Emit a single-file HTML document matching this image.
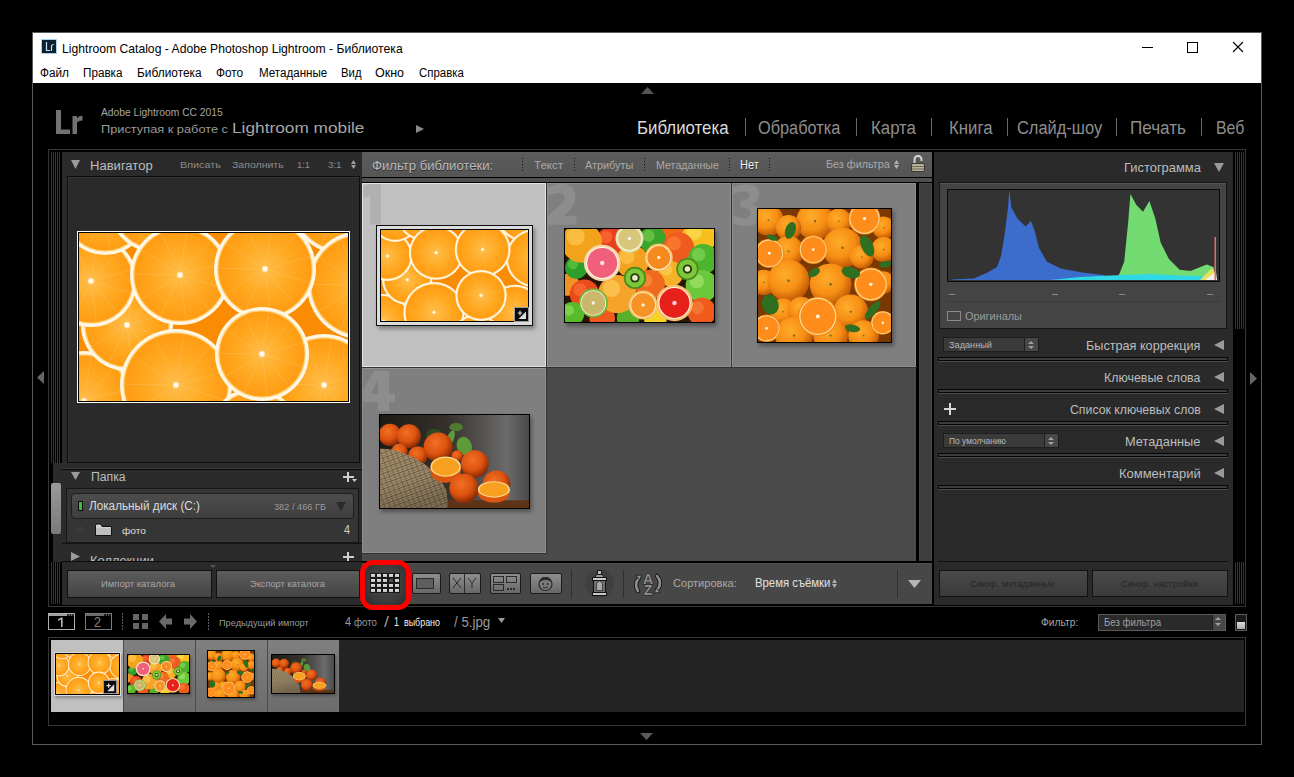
<!DOCTYPE html>
<html><head><meta charset="utf-8"><title>Lightroom</title>
<style>
html,body{margin:0;padding:0;}
body{width:1294px;height:777px;background:#000;position:relative;overflow:hidden;font-family:"Liberation Sans",sans-serif;}
</style></head><body>
<div style="position:absolute;left:32px;top:32px;width:1230px;height:713px;border:1px solid #5a5a5a;box-sizing:border-box;background:#000"></div>
<div style="position:absolute;left:33px;top:33px;width:1228px;height:50px;background:#fff"></div>
<svg style="position:absolute;left:41px;top:39px;" width="16" height="15" viewBox="0 0 16 15" preserveAspectRatio="none"><rect x="0.5" y="0.5" width="15" height="14" fill="#0e202d" stroke="#a8d4ee" stroke-width="1"/><path d="M5.5 3 V11.5 H9" stroke="#c4e6fa" stroke-width="1.2" fill="none"/><path d="M10.5 12 V6.8 Q11 5.5 12.8 5.5" stroke="#c4e6fa" stroke-width="1.2" fill="none"/></svg>
<div style="position:absolute;left:62.4px;top:42.00px;font-size:13.37px;line-height:13.37px;color:#000;white-space:nowrap;transform:scaleX(0.9105);transform-origin:0 0;">Lightroom Catalog - Adobe Photoshop Lightroom - Библиотека</div>
<div style="position:absolute;left:40px;top:67.00px;font-size:12.50px;line-height:12.50px;color:#000;white-space:nowrap;transform:scaleX(0.9437);transform-origin:0 0;">Файл</div>
<div style="position:absolute;left:83.3px;top:67.00px;font-size:12.50px;line-height:12.50px;color:#000;white-space:nowrap;transform:scaleX(0.9355);transform-origin:0 0;">Правка</div>
<div style="position:absolute;left:137px;top:67.00px;font-size:12.50px;line-height:12.50px;color:#000;white-space:nowrap;transform:scaleX(0.9519);transform-origin:0 0;">Библиотека</div>
<div style="position:absolute;left:216.3px;top:67.00px;font-size:12.50px;line-height:12.50px;color:#000;white-space:nowrap;transform:scaleX(0.9471);transform-origin:0 0;">Фото</div>
<div style="position:absolute;left:258.5px;top:67.00px;font-size:12.50px;line-height:12.50px;color:#000;white-space:nowrap;transform:scaleX(0.9278);transform-origin:0 0;">Метаданные</div>
<div style="position:absolute;left:341px;top:67.00px;font-size:12.50px;line-height:12.50px;color:#000;white-space:nowrap;transform:scaleX(0.9065);transform-origin:0 0;">Вид</div>
<div style="position:absolute;left:375px;top:67.00px;font-size:12.50px;line-height:12.50px;color:#000;white-space:nowrap;transform:scaleX(0.9984);transform-origin:0 0;">Окно</div>
<div style="position:absolute;left:418.7px;top:67.00px;font-size:12.50px;line-height:12.50px;color:#000;white-space:nowrap;transform:scaleX(0.9157);transform-origin:0 0;">Справка</div>
<div style="position:absolute;left:1142px;top:47px;width:11px;height:1px;background:#000"></div>
<div style="position:absolute;left:1187px;top:42px;width:11px;height:11px;border:1px solid #000;box-sizing:border-box"></div>
<svg style="position:absolute;left:1232px;top:41px;" width="12" height="12" viewBox="0 0 12 12" preserveAspectRatio="none"><path d="M1 1 L11 11 M11 1 L1 11" stroke="#000" stroke-width="1.1"/></svg>
<svg style="position:absolute;left:55px;top:109px;" width="29" height="26" viewBox="0 0 29 26" preserveAspectRatio="none"><path d="M1 1 H6 V20.5 H15 V25 H1Z" fill="#727272"/><path d="M17.5 25 V7 H22 V9.5 Q23.5 6.8 27.5 6.8 V11.5 Q23.5 11.5 22 13.5 V25Z" fill="#727272"/></svg>
<div style="position:absolute;left:100.5px;top:107.00px;font-size:10.76px;line-height:10.76px;color:#a5a5a5;white-space:nowrap;transform:scaleX(0.9563);transform-origin:0 0;">Adobe Lightroom CC 2015</div>
<div style="position:absolute;left:100.5px;top:123.00px;font-size:11.63px;line-height:11.63px;color:#9a9a9a;white-space:nowrap;transform:scaleX(1.0993);transform-origin:0 0;">Приступая к работе с</div>
<div style="position:absolute;left:232px;top:121.00px;font-size:14.83px;line-height:14.83px;color:#a6a6a6;white-space:nowrap;transform:scaleX(1.1642);transform-origin:0 0;">Lightroom mobile</div>
<svg style="position:absolute;left:416px;top:125px" width="8" height="8"><polygon points="0,0 8,4.0 0,8" fill="#8a8a8a"/></svg>
<div style="position:absolute;left:637px;top:120.00px;font-size:17.88px;line-height:17.88px;color:#dcdcdc;white-space:nowrap;transform:scaleX(0.9433);transform-origin:0 0;">Библиотека</div>
<div style="position:absolute;left:758px;top:120.00px;font-size:17.88px;line-height:17.88px;color:#8e8e8e;white-space:nowrap;transform:scaleX(0.9127);transform-origin:0 0;">Обработка</div>
<div style="position:absolute;left:871px;top:120.00px;font-size:17.88px;line-height:17.88px;color:#8e8e8e;white-space:nowrap;transform:scaleX(0.9407);transform-origin:0 0;">Карта</div>
<div style="position:absolute;left:949px;top:120.00px;font-size:17.88px;line-height:17.88px;color:#8e8e8e;white-space:nowrap;transform:scaleX(0.9386);transform-origin:0 0;">Книга</div>
<div style="position:absolute;left:1016.7px;top:120.00px;font-size:17.88px;line-height:17.88px;color:#8e8e8e;white-space:nowrap;transform:scaleX(0.9203);transform-origin:0 0;">Слайд-шоу</div>
<div style="position:absolute;left:1130.2px;top:120.00px;font-size:17.88px;line-height:17.88px;color:#8e8e8e;white-space:nowrap;transform:scaleX(0.9561);transform-origin:0 0;">Печать</div>
<div style="position:absolute;left:1216.4px;top:120.00px;font-size:17.88px;line-height:17.88px;color:#8e8e8e;white-space:nowrap;transform:scaleX(0.8901);transform-origin:0 0;">Веб</div>
<div style="position:absolute;left:745px;top:118px;width:1px;height:18px;background:#6a6a6a"></div>
<div style="position:absolute;left:856px;top:118px;width:1px;height:18px;background:#6a6a6a"></div>
<div style="position:absolute;left:931px;top:118px;width:1px;height:18px;background:#6a6a6a"></div>
<div style="position:absolute;left:1007px;top:118px;width:1px;height:18px;background:#6a6a6a"></div>
<div style="position:absolute;left:1116px;top:118px;width:1px;height:18px;background:#6a6a6a"></div>
<div style="position:absolute;left:1201px;top:118px;width:1px;height:18px;background:#6a6a6a"></div>
<svg style="position:absolute;left:641px;top:87px" width="13" height="7"><polygon points="0,7 13,7 6.5,0" fill="#555"/></svg>
<svg style="position:absolute;left:640px;top:733px" width="13" height="7"><polygon points="0,0 13,0 6.5,7" fill="#5a5a5a"/></svg>
<svg style="position:absolute;left:37px;top:371px" width="7" height="13"><polygon points="7,0 7,13 0,6.5" fill="#666"/></svg>
<svg style="position:absolute;left:1250px;top:372px" width="7" height="13"><polygon points="0,0 7,6.5 0,13" fill="#666"/></svg>
<div style="position:absolute;left:48px;top:149px;width:1198px;height:458px;border:1px solid #363636;box-sizing:border-box"></div>
<div style="position:absolute;left:51px;top:152px;width:1px;height:311px;background:#343434"></div>
<div style="position:absolute;left:53px;top:152px;width:1px;height:311px;background:#343434"></div>
<div style="position:absolute;left:55px;top:152px;width:1px;height:311px;background:#343434"></div>
<div style="position:absolute;left:57px;top:152px;width:1px;height:311px;background:#343434"></div>
<div style="position:absolute;left:59px;top:152px;width:1px;height:311px;background:#343434"></div>
<div style="position:absolute;left:62px;top:152px;width:300px;height:311px;background:#2a2a2a"></div>
<svg style="position:absolute;left:71px;top:160px" width="9" height="9"><polygon points="0,0 9,0 4.5,9" fill="#9a9a9a"/></svg>
<div style="position:absolute;left:90.2px;top:159.00px;font-size:13.08px;line-height:13.08px;color:#bdbdbd;white-space:nowrap;transform:scaleX(0.9976);transform-origin:0 0;">Навигатор</div>
<div style="position:absolute;left:179.6px;top:160.00px;font-size:9.88px;line-height:9.88px;color:#8c8c8c;white-space:nowrap;transform:scaleX(1.0920);transform-origin:0 0;">Вписать</div>
<div style="position:absolute;left:232.3px;top:160.00px;font-size:9.88px;line-height:9.88px;color:#8c8c8c;white-space:nowrap;transform:scaleX(1.0655);transform-origin:0 0;">Заполнить</div>
<div style="position:absolute;left:297px;top:160.00px;font-size:9.88px;line-height:9.88px;color:#8c8c8c;white-space:nowrap;transform:scaleX(0.9461);transform-origin:0 0;">1:1</div>
<div style="position:absolute;left:327.5px;top:160.00px;font-size:9.88px;line-height:9.88px;color:#8c8c8c;white-space:nowrap;transform:scaleX(0.9825);transform-origin:0 0;">3:1</div>
<svg style="position:absolute;left:351px;top:160px" width="5" height="4"><polygon points="0,4 5,4 2.5,0" fill="#a0a0a0"/></svg>
<svg style="position:absolute;left:351px;top:165px" width="5" height="4"><polygon points="0,0 5,0 2.5,4" fill="#a0a0a0"/></svg>
<div style="position:absolute;left:67px;top:176px;width:293px;height:287px;background:#2a2a2a;border:1px solid #0c0c0c;box-sizing:border-box"></div>
<div style="position:absolute;left:68px;top:177px;width:291px;height:1px;background:#363636"></div>
<div style="position:absolute;left:68px;top:177px;width:1px;height:285px;background:#363636"></div>
<div style="position:absolute;left:77px;top:231px;width:273px;height:172px;background:#fff"></div>
<div style="position:absolute;left:78px;top:232px;width:271px;height:170px;background:#000"></div>
<div style="position:absolute;left:53px;top:463px;width:309px;height:99px;background:#2b2b2b"></div>
<div style="position:absolute;left:62px;top:468px;width:302px;height:1px;background:#3e3e3e"></div>
<div style="position:absolute;left:62px;top:469px;width:302px;height:1px;background:#080808"></div>
<div style="position:absolute;left:51px;top:483px;width:10px;height:51px;background:linear-gradient(#9a9a9a,#7a7a7a);border-radius:2px"></div>
<svg style="position:absolute;left:71px;top:472px" width="9" height="8"><polygon points="0,0 9,0 4.5,8" fill="#9a9a9a"/></svg>
<div style="position:absolute;left:90.8px;top:471.00px;font-size:12.65px;line-height:12.65px;color:#bdbdbd;white-space:nowrap;transform:scaleX(0.9689);transform-origin:0 0;">Папка</div>
<div style="position:absolute;left:343px;top:476px;width:11px;height:2px;background:#cfcfcf"></div>
<div style="position:absolute;left:347px;top:472px;width:2px;height:10px;background:#cfcfcf"></div>
<svg style="position:absolute;left:352px;top:479px" width="5" height="3"><polygon points="0,0 5,0 2.5,3" fill="#cfcfcf"/></svg>
<div style="position:absolute;left:66px;top:488px;width:293px;height:55px;background:#353535;border:1px solid #161616;box-sizing:border-box"></div>
<div style="position:absolute;left:71px;top:493px;width:283px;height:26px;background:linear-gradient(#4d4d4d,#3e3e3e);border:1px solid #1e1e1e;box-sizing:border-box;border-radius:4px"></div>
<div style="position:absolute;left:78px;top:501px;width:5px;height:10px;background:#3dbb3d;border:1px solid #0a0a0a;box-sizing:border-box"></div>
<div style="position:absolute;left:89.4px;top:500.00px;font-size:12.50px;line-height:12.50px;color:#dcdcdc;white-space:nowrap;transform:scaleX(0.9383);transform-origin:0 0;">Локальный диск (C:)</div>
<div style="position:absolute;left:274px;top:502.00px;font-size:9.88px;line-height:9.88px;color:#9a9a9a;white-space:nowrap;transform:scaleX(0.9318);transform-origin:0 0;">382 / 466 ГБ</div>
<svg style="position:absolute;left:336px;top:502px" width="10" height="9"><polygon points="0,0 10,0 5.0,9" fill="#2a2a2a"/></svg>
<svg style="position:absolute;left:78px;top:526px;" width="8" height="8" viewBox="0 0 8 8" preserveAspectRatio="none"><g fill="#4a4a4a"><rect x="0" y="0" width="1" height="1"/><rect x="0" y="2" width="1" height="1"/><rect x="0" y="4" width="1" height="1"/><rect x="0" y="6" width="1" height="1"/><rect x="2" y="1" width="1" height="1"/><rect x="2" y="3" width="1" height="1"/><rect x="2" y="5" width="1" height="1"/><rect x="4" y="2" width="1" height="1"/><rect x="4" y="4" width="1" height="1"/><rect x="6" y="3" width="1" height="1"/></g></svg>
<svg style="position:absolute;left:95px;top:523px;" width="17" height="13" viewBox="0 0 17 13" preserveAspectRatio="none"><path d="M0.5 2.5 L0.5 12.5 L16.5 12.5 L16.5 3.5 L7 3.5 L5.5 1 L1.5 1 Z" fill="#d0d0d0" stroke="#111" stroke-width="1"/><rect x="1" y="5" width="15" height="7" fill="#bdbdbd"/></svg>
<div style="position:absolute;left:122px;top:526.00px;font-size:9.45px;line-height:9.45px;color:#dedede;white-space:nowrap;transform:scaleX(1.0764);transform-origin:0 0;">фото</div>
<div style="position:absolute;left:344px;top:524.00px;font-size:12.35px;line-height:12.35px;color:#cfcfcf;white-space:nowrap;transform:scaleX(0.8732);transform-origin:0 0;">4</div>
<div style="position:absolute;left:62px;top:543px;width:300px;height:1px;background:#141414"></div>
<div style="position:absolute;left:53px;top:545px;width:309px;height:16px;overflow:hidden">
<svg style="position:absolute;left:18px;top:7px" width="9" height="9"><polygon points="0,0 9,4.5 0,9" fill="#9a9a9a"/></svg>
<div style="position:absolute;left:37px;top:10.00px;font-size:12.65px;line-height:12.65px;color:#bdbdbd;white-space:nowrap;transform:scaleX(1.0189);transform-origin:0 0;">Коллекции</div>
<div style="position:absolute;left:290px;top:11px;width:11px;height:2px;background:#cfcfcf"></div>
<div style="position:absolute;left:294px;top:7px;width:2px;height:10px;background:#cfcfcf"></div>
</div>
<div style="position:absolute;left:62px;top:561px;width:300px;height:1px;background:#0c0c0c"></div>
<div style="position:absolute;left:51px;top:562px;width:1px;height:42px;background:#343434"></div>
<div style="position:absolute;left:53px;top:562px;width:1px;height:42px;background:#343434"></div>
<div style="position:absolute;left:55px;top:562px;width:1px;height:42px;background:#343434"></div>
<div style="position:absolute;left:57px;top:562px;width:1px;height:42px;background:#343434"></div>
<div style="position:absolute;left:59px;top:562px;width:1px;height:42px;background:#343434"></div>
<div style="position:absolute;left:62px;top:562px;width:300px;height:43px;background:#2a2a2a"></div>
<svg style="position:absolute;left:210px;top:565px" width="6" height="3"><polygon points="0,0 6,0 3.0,3" fill="#555"/></svg>
<div style="position:absolute;left:67px;top:570px;width:145px;height:28px;background:linear-gradient(#5c5c5c,#444);border:1px solid #111;box-sizing:border-box"></div>
<div style="position:absolute;left:216px;top:570px;width:144px;height:28px;background:linear-gradient(#5c5c5c,#444);border:1px solid #111;box-sizing:border-box"></div>
<div style="position:absolute;left:101px;top:579.00px;font-size:9.59px;line-height:9.59px;color:#a6a6a6;white-space:nowrap;transform:scaleX(0.9864);transform-origin:0 0;">Импорт каталога</div>
<div style="position:absolute;left:250px;top:579.00px;font-size:9.59px;line-height:9.59px;color:#a6a6a6;white-space:nowrap;transform:scaleX(0.9674);transform-origin:0 0;">Экспорт каталога</div>
<div style="position:absolute;left:362px;top:152px;width:570px;height:25px;background:linear-gradient(#5c5c5c,#555)"></div>
<div style="position:absolute;left:362px;top:178px;width:570px;height:4px;background:#4f4f4f"></div>
<div style="position:absolute;left:372.4px;top:160.00px;font-size:12.21px;line-height:12.21px;color:#bcbcbc;white-space:nowrap;transform:scaleX(1.0741);transform-origin:0 0;text-shadow:0 1px 0 #2a2a2a">Фильтр библиотеки:</div>
<div style="position:absolute;left:522px;top:158px;width:1px;height:1px;background:#111"></div>
<div style="position:absolute;left:522px;top:161px;width:1px;height:1px;background:#111"></div>
<div style="position:absolute;left:522px;top:164px;width:1px;height:1px;background:#111"></div>
<div style="position:absolute;left:522px;top:167px;width:1px;height:1px;background:#111"></div>
<div style="position:absolute;left:522px;top:170px;width:1px;height:1px;background:#111"></div>
<div style="position:absolute;left:574px;top:158px;width:1px;height:1px;background:#111"></div>
<div style="position:absolute;left:574px;top:161px;width:1px;height:1px;background:#111"></div>
<div style="position:absolute;left:574px;top:164px;width:1px;height:1px;background:#111"></div>
<div style="position:absolute;left:574px;top:167px;width:1px;height:1px;background:#111"></div>
<div style="position:absolute;left:574px;top:170px;width:1px;height:1px;background:#111"></div>
<div style="position:absolute;left:644px;top:158px;width:1px;height:1px;background:#111"></div>
<div style="position:absolute;left:644px;top:161px;width:1px;height:1px;background:#111"></div>
<div style="position:absolute;left:644px;top:164px;width:1px;height:1px;background:#111"></div>
<div style="position:absolute;left:644px;top:167px;width:1px;height:1px;background:#111"></div>
<div style="position:absolute;left:644px;top:170px;width:1px;height:1px;background:#111"></div>
<div style="position:absolute;left:729px;top:158px;width:1px;height:1px;background:#111"></div>
<div style="position:absolute;left:729px;top:161px;width:1px;height:1px;background:#111"></div>
<div style="position:absolute;left:729px;top:164px;width:1px;height:1px;background:#111"></div>
<div style="position:absolute;left:729px;top:167px;width:1px;height:1px;background:#111"></div>
<div style="position:absolute;left:729px;top:170px;width:1px;height:1px;background:#111"></div>
<div style="position:absolute;left:769px;top:158px;width:1px;height:1px;background:#111"></div>
<div style="position:absolute;left:769px;top:161px;width:1px;height:1px;background:#111"></div>
<div style="position:absolute;left:769px;top:164px;width:1px;height:1px;background:#111"></div>
<div style="position:absolute;left:769px;top:167px;width:1px;height:1px;background:#111"></div>
<div style="position:absolute;left:769px;top:170px;width:1px;height:1px;background:#111"></div>
<div style="position:absolute;left:533.6px;top:160.00px;font-size:11.34px;line-height:11.34px;color:#a9a9a9;white-space:nowrap;transform:scaleX(1.0160);transform-origin:0 0;">Текст</div>
<div style="position:absolute;left:584.7px;top:160.00px;font-size:11.34px;line-height:11.34px;color:#a9a9a9;white-space:nowrap;transform:scaleX(0.9583);transform-origin:0 0;">Атрибуты</div>
<div style="position:absolute;left:656px;top:160.00px;font-size:11.34px;line-height:11.34px;color:#a9a9a9;white-space:nowrap;transform:scaleX(0.9436);transform-origin:0 0;">Метаданные</div>
<div style="position:absolute;left:740.3px;top:159.00px;font-size:12.79px;line-height:12.79px;color:#f4f4f4;white-space:nowrap;transform:scaleX(0.8584);transform-origin:0 0;text-shadow:0 1px 1px #222">Нет</div>
<div style="position:absolute;left:825.6px;top:159.00px;font-size:11.34px;line-height:11.34px;color:#a9a9a9;white-space:nowrap;transform:scaleX(0.9530);transform-origin:0 0;">Без фильтра</div>
<svg style="position:absolute;left:894px;top:160px" width="5" height="4"><polygon points="0,4 5,4 2.5,0" fill="#b0b0b0"/></svg>
<svg style="position:absolute;left:894px;top:165px" width="5" height="4"><polygon points="0,0 5,0 2.5,4" fill="#b0b0b0"/></svg>
<svg style="position:absolute;left:911px;top:154px;" width="14" height="19" viewBox="0 0 14 19" preserveAspectRatio="none"><path d="M3.5 10 L3.5 5.5 A3.5 3.5 0 0 1 10.5 5.5 L10.5 7" fill="none" stroke="#d8d8d8" stroke-width="2"/><rect x="0.5" y="9.5" width="13" height="8" rx="1.5" fill="#b9b39a" stroke="#3a3a30" stroke-width="1"/><path d="M1 12.5 H13 M1 15 H13" stroke="#6f6a58" stroke-width="1"/></svg>
<div style="position:absolute;left:362px;top:183px;width:555px;height:379px;background:#4a4a4a"></div>
<div style="position:absolute;left:919px;top:183px;width:13px;height:379px;background:#3e3e3e;border:1px solid #474747;box-sizing:border-box"></div>
<div style="position:absolute;left:916px;top:183px;width:3px;height:379px;background:#000"></div>
<div style="position:absolute;left:546px;top:183px;width:1px;height:185px;background:#333"></div>
<div style="position:absolute;left:731px;top:183px;width:1px;height:185px;background:#333"></div>
<div style="position:absolute;left:362px;top:367px;width:555px;height:1px;background:#333"></div>
<div style="position:absolute;left:546px;top:368px;width:1px;height:186px;background:#333"></div>
<div style="position:absolute;left:362px;top:553px;width:185px;height:1px;background:#333"></div>
<div style="position:absolute;left:362px;top:183px;width:184px;height:184px;background:#c1c1c1;border:1px solid #e2e2e2;box-sizing:border-box"></div>
<svg style="position:absolute;left:363px;top:184px;" width="40" height="44" viewBox="1 1 40 44" preserveAspectRatio="none"><path d="M-2 5 L10 0 H19 V41.5 H8 V12.5 L-2 17Z" fill="#b1b1b1" fill-rule="evenodd"/></svg>
<div style="position:absolute;left:547px;top:183px;width:184px;height:184px;background:#7f7f7f;border:1px solid #8f8f8f;box-sizing:border-box"></div>
<svg style="position:absolute;left:548px;top:184px;" width="40" height="44" viewBox="1 1 40 44" preserveAspectRatio="none"><path d="M-1 6 Q6 0.5 15 0.8 Q28.5 1.5 28.5 14 Q28.5 22 19 31 L17.5 33 H29.3 V41.8 H-1 V35 L16 19 Q19 14.5 16 11.5 Q11 8 2 13Z" fill="#8d8d8d" fill-rule="evenodd"/></svg>
<div style="position:absolute;left:732px;top:183px;width:184px;height:184px;background:#7f7f7f;border:1px solid #8f8f8f;box-sizing:border-box"></div>
<svg style="position:absolute;left:733px;top:184px;" width="40" height="44" viewBox="1 1 40 44" preserveAspectRatio="none"><path d="M-1 5 Q8 1 15 1.2 Q27 1.5 27 11.5 Q27 18 20 21 Q28 24 28 31.5 Q28 43 13 43 Q5 43 -1 39 V31 Q6 35.5 12 35.5 Q18.5 35.5 18.5 30 Q18.5 24.5 10 24.5 H8.7 V17.5 H10 Q17.5 17 17.5 12.5 Q17.5 8.5 12 8.5 Q6 8.5 -1 12Z" fill="#8d8d8d" fill-rule="evenodd"/></svg>
<div style="position:absolute;left:362px;top:368px;width:184px;height:185px;background:#7f7f7f;border:1px solid #8f8f8f;box-sizing:border-box"></div>
<svg style="position:absolute;left:363px;top:369px;" width="40" height="44" viewBox="1 1 40 44" preserveAspectRatio="none"><path d="M12 3 H27 V26 H33 V34 H27 V43 H16 V34 H-1 V25Z M9 26 L16 12 V26Z" fill="#8d8d8d" fill-rule="evenodd"/></svg>
<div style="position:absolute;left:376px;top:225px;width:157px;height:101px;background:#dcdcdc;border:1px solid #111;box-sizing:border-box;box-shadow:2px 3px 4px rgba(0,0,0,.35)"></div>
<div style="position:absolute;left:380px;top:229px;width:149px;height:93px;background:#000"></div>
<div style="position:absolute;left:564px;top:228px;width:151px;height:95px;background:#000;box-shadow:2px 3px 4px rgba(0,0,0,.35)"></div>
<div style="position:absolute;left:757px;top:208px;width:135px;height:135px;background:#000;box-shadow:2px 3px 4px rgba(0,0,0,.35)"></div>
<div style="position:absolute;left:379px;top:414px;width:151px;height:95px;background:#000;box-shadow:2px 3px 4px rgba(0,0,0,.35)"></div>
<div style="position:absolute;left:362px;top:561px;width:570px;height:2px;background:#000"></div>
<div style="position:absolute;left:362px;top:563px;width:570px;height:41px;background:#474747;border-top:1px solid #525252;box-sizing:border-box"></div>
<div style="position:absolute;left:412px;top:573px;width:29px;height:21px;background:linear-gradient(#8e8e8e,#686868);border:1px solid #1c1c1c;box-sizing:border-box;border-radius:2px"></div>
<div style="position:absolute;left:416px;top:578px;width:18px;height:11px;border:1px solid #2a2a2a;box-sizing:border-box;background:#5e5e5e"></div>
<div style="position:absolute;left:449px;top:573px;width:32px;height:21px;background:linear-gradient(#8e8e8e,#686868);border:1px solid #1c1c1c;box-sizing:border-box;border-radius:2px"></div>
<div style="position:absolute;left:464px;top:574px;width:1px;height:19px;background:#2a2a2a"></div>
<svg style="position:absolute;left:451px;top:576px;" width="12" height="14" viewBox="0 0 12 14" preserveAspectRatio="none"><path d="M2 2 L10 12 M10 2 L2 12" stroke="#2a2a2a" stroke-width="1"/></svg>
<svg style="position:absolute;left:466px;top:576px;" width="12" height="14" viewBox="0 0 12 14" preserveAspectRatio="none"><path d="M2 2 L6 7 L10 2 M6 7 L6 12" stroke="#2a2a2a" stroke-width="1" fill="none"/></svg>
<div style="position:absolute;left:490px;top:573px;width:31px;height:21px;background:linear-gradient(#8e8e8e,#686868);border:1px solid #1c1c1c;box-sizing:border-box;border-radius:2px"></div>
<svg style="position:absolute;left:490px;top:573px;" width="31" height="21" viewBox="0 0 31 21" preserveAspectRatio="none"><g fill="none" stroke="#2a2a2a" stroke-width="1"><rect x="3.5" y="3.5" width="10" height="6"/><rect x="16.5" y="3.5" width="10" height="6"/><rect x="3.5" y="11.5" width="10" height="6"/></g><g fill="#2a2a2a"><rect x="17" y="15" width="2" height="2"/><rect x="20" y="15" width="2" height="2"/><rect x="23" y="15" width="2" height="2"/></g></svg>
<div style="position:absolute;left:530px;top:573px;width:32px;height:21px;background:linear-gradient(#8e8e8e,#686868);border:1px solid #1c1c1c;box-sizing:border-box;border-radius:2px"></div>
<svg style="position:absolute;left:537px;top:575px;" width="17" height="17" viewBox="0 0 17 17" preserveAspectRatio="none"><circle cx="8.5" cy="9" r="6.5" fill="#7a7a7a" stroke="#2a2a2a" stroke-width="1.2"/><path d="M2.5 7 Q4 1.5 8.5 2 Q13 1.5 14.5 7 Q11 4.5 8.5 5 Q6 4.5 2.5 7Z" fill="#2a2a2a"/><circle cx="6.3" cy="9" r="0.9" fill="#2a2a2a"/><circle cx="10.7" cy="9" r="0.9" fill="#2a2a2a"/><path d="M6 12 Q8.5 13.5 11 12" stroke="#2a2a2a" fill="none"/></svg>
<div style="position:absolute;left:571px;top:570px;width:1px;height:28px;background:#303030"></div>
<div style="position:absolute;left:623px;top:570px;width:1px;height:28px;background:#303030"></div>
<div style="position:absolute;left:585px;top:569px;width:29px;height:29px;border-radius:50%;background:radial-gradient(#3f3f3f 60%,#444 100%)"></div>
<svg style="position:absolute;left:590px;top:569px;" width="19" height="28" viewBox="0 0 19 28" preserveAspectRatio="none"><rect x="7.5" y="1.5" width="4" height="4" fill="#b8b8b8" stroke="#1a1a1a" stroke-width="1"/><path d="M4.5 9.5 L6.5 5.5 L12.5 5.5 L14.5 9.5Z" fill="#9a9a9a" stroke="#1a1a1a" stroke-width="1"/><rect x="2.5" y="8.5" width="14" height="3" fill="#c8c8c8" stroke="#111" stroke-width="1"/><rect x="3.5" y="11.5" width="12" height="12" fill="#6e6e6e" stroke="#111" stroke-width="1"/><path d="M6.5 14.5 L9.5 11.8 L12.5 14.5 L12.5 21.5 L6.5 21.5Z" fill="#a8a8a8" stroke="#333" stroke-width="0.8"/><rect x="2.5" y="23.5" width="14" height="3" fill="#c8c8c8" stroke="#111" stroke-width="1"/></svg>
<svg style="position:absolute;left:630px;top:569px;" width="36" height="28" viewBox="0 0 36 28" preserveAspectRatio="none"><g fill="none" stroke-linecap="round"><path d="M9 9 Q3.5 15 8 22" stroke="#1a1a1a" stroke-width="4.5"/><path d="M9 9 Q3.5 15 8 22" stroke="#8e8e8e" stroke-width="2.5"/><path d="M27 7 Q32.5 13 28 20" stroke="#1a1a1a" stroke-width="4.5"/><path d="M27 7 Q32.5 13 28 20" stroke="#8e8e8e" stroke-width="2.5"/></g><path d="M6 6.5 L11.5 6 L10 11.5Z" fill="#8e8e8e" stroke="#1a1a1a" stroke-width="0.8"/><path d="M30 23.5 L24.5 24 L26 18.5Z" fill="#8e8e8e" stroke="#1a1a1a" stroke-width="0.8"/><text x="18" y="14.5" font-size="14" font-weight="bold" fill="#8e8e8e" stroke="#1a1a1a" stroke-width="1" paint-order="stroke" text-anchor="middle" font-family="Liberation Sans">A</text><text x="18" y="25.5" font-size="14" font-weight="bold" fill="#8e8e8e" stroke="#1a1a1a" stroke-width="1" paint-order="stroke" text-anchor="middle" font-family="Liberation Sans">Z</text></svg>
<div style="position:absolute;left:672.5px;top:577.00px;font-size:11.63px;line-height:11.63px;color:#a9a9a9;white-space:nowrap;transform:scaleX(0.9515);transform-origin:0 0;">Сортировка:</div>
<div style="position:absolute;left:755px;top:578.00px;font-size:11.92px;line-height:11.92px;color:#e0e0e0;white-space:nowrap;transform:scaleX(0.9512);transform-origin:0 0;">Время съёмки</div>
<svg style="position:absolute;left:832px;top:579px" width="5" height="4"><polygon points="0,4 5,4 2.5,0" fill="#b0b0b0"/></svg>
<svg style="position:absolute;left:832px;top:584px" width="5" height="4"><polygon points="0,0 5,0 2.5,4" fill="#b0b0b0"/></svg>
<div style="position:absolute;left:897px;top:570px;width:1px;height:28px;background:#303030"></div>
<svg style="position:absolute;left:908px;top:580px" width="13" height="8"><polygon points="0,0 13,0 6.5,8" fill="#b5b5b5"/></svg>
<div style="position:absolute;left:934px;top:152px;width:299px;height:453px;background:#2a2a2a"></div>
<div style="position:absolute;left:1235px;top:152px;width:1px;height:177px;background:#343434"></div>
<div style="position:absolute;left:1237px;top:152px;width:1px;height:177px;background:#343434"></div>
<div style="position:absolute;left:1239px;top:152px;width:1px;height:177px;background:#343434"></div>
<div style="position:absolute;left:1241px;top:152px;width:1px;height:177px;background:#343434"></div>
<div style="position:absolute;left:1243px;top:152px;width:1px;height:177px;background:#343434"></div>
<div style="position:absolute;left:1235px;top:562px;width:1px;height:42px;background:#343434"></div>
<div style="position:absolute;left:1237px;top:562px;width:1px;height:42px;background:#343434"></div>
<div style="position:absolute;left:1239px;top:562px;width:1px;height:42px;background:#343434"></div>
<div style="position:absolute;left:1241px;top:562px;width:1px;height:42px;background:#343434"></div>
<div style="position:absolute;left:1243px;top:562px;width:1px;height:42px;background:#343434"></div>
<div style="position:absolute;left:1124.2px;top:162.00px;font-size:12.79px;line-height:12.79px;color:#bdbdbd;white-space:nowrap;transform:scaleX(1.0109);transform-origin:0 0;">Гистограмма</div>
<svg style="position:absolute;left:1214px;top:163px" width="10" height="9"><polygon points="0,0 10,0 5.0,9" fill="#9a9a9a"/></svg>
<div style="position:absolute;left:939px;top:182px;width:288px;height:147px;background:#444;border:1px solid #161616;box-sizing:border-box;box-shadow:inset 0 1px 0 #555"></div>
<div style="position:absolute;left:947px;top:189px;width:273px;height:93px;background:#333;border:1px solid #0a0a0a;box-sizing:border-box"></div>
<div style="position:absolute;left:949px;top:294px;width:6px;height:1px;background:#8a8a8a"></div>
<div style="position:absolute;left:1052px;top:294px;width:6px;height:1px;background:#8a8a8a"></div>
<div style="position:absolute;left:1119px;top:294px;width:6px;height:1px;background:#8a8a8a"></div>
<div style="position:absolute;left:1207px;top:294px;width:6px;height:1px;background:#8a8a8a"></div>
<div style="position:absolute;left:947px;top:301px;width:273px;height:1px;background:#3a3a3a"></div>
<div style="position:absolute;left:947px;top:311px;width:14px;height:10px;border:1px solid #8a8a8a;box-sizing:border-box"></div>
<div style="position:absolute;left:965.4px;top:311.00px;font-size:11.34px;line-height:11.34px;color:#9a9a9a;white-space:nowrap;transform:scaleX(0.9619);transform-origin:0 0;">Оригиналы</div>
<div style="position:absolute;left:943px;top:337px;width:96px;height:15px;background:#3a3a3a;border:1px solid #1e1e1e;box-sizing:border-box"></div>
<div style="position:absolute;left:1024px;top:338px;width:14px;height:13px;background:#474747;border-left:1px solid #1e1e1e;box-sizing:border-box"></div>
<svg style="position:absolute;left:1028px;top:341px" width="6" height="3"><polygon points="0,3 6,3 3.0,0" fill="#a0a0a0"/></svg>
<svg style="position:absolute;left:1028px;top:346px" width="6" height="3"><polygon points="0,0 6,0 3.0,3" fill="#a0a0a0"/></svg>
<div style="position:absolute;left:949px;top:340.00px;font-size:9.59px;line-height:9.59px;color:#b8b8b8;white-space:nowrap;transform:scaleX(0.9574);transform-origin:0 0;">Заданный</div>
<div style="position:absolute;left:1086.3px;top:340.00px;font-size:12.79px;line-height:12.79px;color:#bdbdbd;white-space:nowrap;transform:scaleX(0.9893);transform-origin:0 0;">Быстрая коррекция</div>
<svg style="position:absolute;left:1214px;top:340px" width="10" height="10"><polygon points="10,0 10,10 0,5.0" fill="#9a9a9a"/></svg>
<div style="position:absolute;left:938px;top:357px;width:290px;height:4px;background:#3c3c3c;border:1px solid #050505;box-sizing:border-box"></div>
<div style="position:absolute;left:938px;top:361px;width:290px;height:1px;background:#4a4a4a"></div>
<div style="position:absolute;left:1104.3px;top:372.00px;font-size:12.79px;line-height:12.79px;color:#bdbdbd;white-space:nowrap;transform:scaleX(0.9694);transform-origin:0 0;">Ключевые слова</div>
<svg style="position:absolute;left:1214px;top:372px" width="10" height="10"><polygon points="10,0 10,10 0,5.0" fill="#9a9a9a"/></svg>
<div style="position:absolute;left:938px;top:389px;width:290px;height:4px;background:#3c3c3c;border:1px solid #050505;box-sizing:border-box"></div>
<div style="position:absolute;left:938px;top:393px;width:290px;height:1px;background:#4a4a4a"></div>
<div style="position:absolute;left:944px;top:408px;width:12px;height:2px;background:#d8d8d8"></div>
<div style="position:absolute;left:949px;top:403px;width:2px;height:12px;background:#d8d8d8"></div>
<div style="position:absolute;left:1069.7px;top:404.00px;font-size:12.79px;line-height:12.79px;color:#bdbdbd;white-space:nowrap;transform:scaleX(0.9614);transform-origin:0 0;">Список ключевых слов</div>
<svg style="position:absolute;left:1214px;top:404px" width="10" height="10"><polygon points="10,0 10,10 0,5.0" fill="#9a9a9a"/></svg>
<div style="position:absolute;left:938px;top:421px;width:290px;height:4px;background:#3c3c3c;border:1px solid #050505;box-sizing:border-box"></div>
<div style="position:absolute;left:938px;top:425px;width:290px;height:1px;background:#4a4a4a"></div>
<div style="position:absolute;left:943px;top:433px;width:116px;height:15px;background:#3a3a3a;border:1px solid #1e1e1e;box-sizing:border-box"></div>
<div style="position:absolute;left:1044px;top:434px;width:14px;height:13px;background:#474747;border-left:1px solid #1e1e1e;box-sizing:border-box"></div>
<svg style="position:absolute;left:1048px;top:437px" width="6" height="3"><polygon points="0,3 6,3 3.0,0" fill="#a0a0a0"/></svg>
<svg style="position:absolute;left:1048px;top:442px" width="6" height="3"><polygon points="0,0 6,0 3.0,3" fill="#a0a0a0"/></svg>
<div style="position:absolute;left:949px;top:436.00px;font-size:9.59px;line-height:9.59px;color:#b8b8b8;white-space:nowrap;transform:scaleX(0.8786);transform-origin:0 0;">По умолчанию</div>
<div style="position:absolute;left:1125.4px;top:436.00px;font-size:12.79px;line-height:12.79px;color:#bdbdbd;white-space:nowrap;transform:scaleX(1.0023);transform-origin:0 0;">Метаданные</div>
<svg style="position:absolute;left:1214px;top:436px" width="10" height="10"><polygon points="10,0 10,10 0,5.0" fill="#9a9a9a"/></svg>
<div style="position:absolute;left:938px;top:453px;width:290px;height:4px;background:#3c3c3c;border:1px solid #050505;box-sizing:border-box"></div>
<div style="position:absolute;left:938px;top:457px;width:290px;height:1px;background:#4a4a4a"></div>
<div style="position:absolute;left:1119.2px;top:468.00px;font-size:12.79px;line-height:12.79px;color:#bdbdbd;white-space:nowrap;transform:scaleX(1.0154);transform-origin:0 0;">Комментарий</div>
<svg style="position:absolute;left:1214px;top:468px" width="10" height="10"><polygon points="10,0 10,10 0,5.0" fill="#9a9a9a"/></svg>
<div style="position:absolute;left:938px;top:485px;width:290px;height:4px;background:#3c3c3c;border:1px solid #050505;box-sizing:border-box"></div>
<div style="position:absolute;left:938px;top:489px;width:290px;height:1px;background:#4a4a4a"></div>
<div style="position:absolute;left:938px;top:561px;width:290px;height:1px;background:#0e0e0e"></div>
<div style="position:absolute;left:939px;top:570px;width:149px;height:27px;background:linear-gradient(#4a4a4a,#3a3a3a);border:1px solid #111;box-sizing:border-box"></div>
<div style="position:absolute;left:1092px;top:570px;width:136px;height:27px;background:linear-gradient(#4a4a4a,#3a3a3a);border:1px solid #111;box-sizing:border-box"></div>
<div style="position:absolute;left:970px;top:579.00px;font-size:9.59px;line-height:9.59px;color:#252525;white-space:nowrap;transform:scaleX(0.9655);transform-origin:0 0;">Синхр. метаданные</div>
<div style="position:absolute;left:1121px;top:579.00px;font-size:9.59px;line-height:9.59px;color:#252525;white-space:nowrap;transform:scaleX(0.9815);transform-origin:0 0;">Синхр. настройки</div>
<div style="position:absolute;left:48px;top:613px;width:27px;height:17px;border:1px solid #b0b0b0;box-sizing:border-box"></div>
<div style="position:absolute;left:49px;top:614px;width:25px;height:2px;background:#a0a0a0"></div>
<svg style="position:absolute;left:66px;top:613px;" width="9" height="4" viewBox="0 0 9 4" preserveAspectRatio="none"><circle cx="2" cy="2" r="1" fill="#000"/><circle cx="4.5" cy="2" r="1" fill="#000"/><circle cx="7" cy="2" r="1" fill="#000"/></svg>
<svg style="position:absolute;left:57px;top:617px;" width="8" height="10" viewBox="0 0 8 10" preserveAspectRatio="none"><path d="M1 2.2 L4.2 0.5 H5.6 V10 H4 V2.4 L1 3.8Z" fill="#b8b8b8"/></svg>
<div style="position:absolute;left:85px;top:613px;width:27px;height:17px;border:1px solid #7a7a7a;box-sizing:border-box"></div>
<div style="position:absolute;left:86px;top:614px;width:25px;height:2px;background:#6a6a6a"></div>
<svg style="position:absolute;left:103px;top:613px;" width="9" height="4" viewBox="0 0 9 4" preserveAspectRatio="none"><circle cx="2" cy="2" r="1" fill="#000"/><circle cx="4.5" cy="2" r="1" fill="#000"/><circle cx="7" cy="2" r="1" fill="#000"/></svg>
<div style="position:absolute;left:94px;top:616.00px;font-size:13.81px;line-height:13.81px;color:#808080;white-space:nowrap;transform:scaleX(0.9115);transform-origin:0 0;">2</div>
<div style="position:absolute;left:122px;top:613px;width:1px;height:2px;background:#5a5a5a"></div>
<div style="position:absolute;left:122px;top:616px;width:1px;height:2px;background:#5a5a5a"></div>
<div style="position:absolute;left:122px;top:619px;width:1px;height:2px;background:#5a5a5a"></div>
<div style="position:absolute;left:122px;top:622px;width:1px;height:2px;background:#5a5a5a"></div>
<div style="position:absolute;left:122px;top:625px;width:1px;height:2px;background:#5a5a5a"></div>
<div style="position:absolute;left:122px;top:628px;width:1px;height:2px;background:#5a5a5a"></div>
<svg style="position:absolute;left:133px;top:614px;" width="15" height="15" viewBox="0 0 15 15" preserveAspectRatio="none"><g fill="#666"><rect x="0" y="0" width="6" height="6"/><rect x="9" y="0" width="6" height="6"/><rect x="0" y="9" width="6" height="6"/><rect x="9" y="9" width="6" height="6"/></g></svg>
<svg style="position:absolute;left:159px;top:614px;" width="13" height="15" viewBox="0 0 13 15" preserveAspectRatio="none"><path d="M0 7.5 L7 0 L7 4.5 L13 4.5 L13 10.5 L7 10.5 L7 15Z" fill="#6a6a6a"/></svg>
<svg style="position:absolute;left:184px;top:614px;" width="13" height="15" viewBox="0 0 13 15" preserveAspectRatio="none"><path d="M13 7.5 L6 0 L6 4.5 L0 4.5 L0 10.5 L6 10.5 L6 15Z" fill="#6a6a6a"/></svg>
<div style="position:absolute;left:208px;top:613px;width:1px;height:2px;background:#5a5a5a"></div>
<div style="position:absolute;left:208px;top:616px;width:1px;height:2px;background:#5a5a5a"></div>
<div style="position:absolute;left:208px;top:619px;width:1px;height:2px;background:#5a5a5a"></div>
<div style="position:absolute;left:208px;top:622px;width:1px;height:2px;background:#5a5a5a"></div>
<div style="position:absolute;left:208px;top:625px;width:1px;height:2px;background:#5a5a5a"></div>
<div style="position:absolute;left:208px;top:628px;width:1px;height:2px;background:#5a5a5a"></div>
<div style="position:absolute;left:219.3px;top:618.00px;font-size:9.88px;line-height:9.88px;color:#9a9a9a;white-space:nowrap;transform:scaleX(0.9310);transform-origin:0 0;">Предыдущий импорт</div>
<div style="position:absolute;left:344.8px;top:615.00px;font-size:13.08px;line-height:13.08px;color:#9a9a9a;white-space:nowrap;transform:scaleX(0.8247);transform-origin:0 0;">4</div>
<div style="position:absolute;left:354px;top:618.00px;font-size:10.17px;line-height:10.17px;color:#9a9a9a;white-space:nowrap;transform:scaleX(0.9579);transform-origin:0 0;">фото</div>
<div style="position:absolute;left:384px;top:615.00px;font-size:14.53px;line-height:14.53px;color:#9a9a9a;white-space:nowrap;transform:scaleX(1.2382);transform-origin:0 0;">/</div>
<div style="position:absolute;left:393.8px;top:615.00px;font-size:13.08px;line-height:13.08px;color:#f0f0f0;white-space:nowrap;transform:scaleX(0.6872);transform-origin:0 0;">1</div>
<div style="position:absolute;left:403.5px;top:618.00px;font-size:10.17px;line-height:10.17px;color:#f0f0f0;white-space:nowrap;transform:scaleX(0.8751);transform-origin:0 0;">выбрано</div>
<div style="position:absolute;left:453.7px;top:615.00px;font-size:14.53px;line-height:14.53px;color:#9a9a9a;white-space:nowrap;transform:scaleX(0.9168);transform-origin:0 0;">/ 5.jpg</div>
<svg style="position:absolute;left:498px;top:618px" width="7" height="5"><polygon points="0,0 7,0 3.5,5" fill="#9a9a9a"/></svg>
<div style="position:absolute;left:1041px;top:617.00px;font-size:10.61px;line-height:10.61px;color:#a6a6a6;white-space:nowrap;transform:scaleX(0.9691);transform-origin:0 0;">Фильтр:</div>
<div style="position:absolute;left:1098px;top:614px;width:128px;height:17px;background:#2a2a2a;border:1px solid #5a5a5a;box-sizing:border-box"></div>
<div style="position:absolute;left:1212px;top:615px;width:13px;height:15px;background:#474747;border-left:1px solid #1e1e1e;box-sizing:border-box"></div>
<svg style="position:absolute;left:1215px;top:617px" width="6" height="3"><polygon points="0,3 6,3 3.0,0" fill="#a0a0a0"/></svg>
<svg style="position:absolute;left:1215px;top:623px" width="6" height="3"><polygon points="0,0 6,0 3.0,3" fill="#a0a0a0"/></svg>
<div style="position:absolute;left:1104px;top:617.00px;font-size:10.61px;line-height:10.61px;color:#a0a0a0;white-space:nowrap;transform:scaleX(0.9098);transform-origin:0 0;">Без фильтра</div>
<div style="position:absolute;left:1235px;top:614px;width:12px;height:17px;border:1px solid #5a5a5a;box-sizing:border-box;background:#1a1a1a"></div>
<div style="position:absolute;left:1237px;top:622px;width:8px;height:7px;background:linear-gradient(#ddd,#aaa)"></div>
<div style="position:absolute;left:48px;top:637px;width:1198px;height:89px;border:1px solid #363636;box-sizing:border-box"></div>
<div style="position:absolute;left:51px;top:640px;width:1193px;height:72px;background:#232323"></div>
<div style="position:absolute;left:51px;top:640px;width:72px;height:72px;background:#c0c0c0"></div>
<div style="position:absolute;left:123px;top:640px;width:72px;height:72px;background:linear-gradient(#808080,#6c6c6c);border-left:1px solid #4a4a4a;box-sizing:border-box"></div>
<div style="position:absolute;left:195px;top:640px;width:72px;height:72px;background:linear-gradient(#808080,#6c6c6c);border-left:1px solid #4a4a4a;box-sizing:border-box"></div>
<div style="position:absolute;left:267px;top:640px;width:72px;height:72px;background:linear-gradient(#808080,#6c6c6c);border-left:1px solid #4a4a4a;box-sizing:border-box"></div>
<div style="position:absolute;left:54px;top:652px;width:67px;height:44px;background:#dcdcdc;box-shadow:1px 2px 3px rgba(0,0,0,.3)"></div>
<div style="position:absolute;left:55px;top:653px;width:65px;height:42px;background:#000"></div>
<div style="position:absolute;left:127px;top:654px;width:63px;height:40px;background:#000;box-shadow:1px 2px 3px rgba(0,0,0,.3)"></div>
<div style="position:absolute;left:207px;top:650px;width:48px;height:48px;background:#000;box-shadow:1px 2px 3px rgba(0,0,0,.3)"></div>
<div style="position:absolute;left:271px;top:654px;width:64px;height:40px;background:#000;box-shadow:1px 2px 3px rgba(0,0,0,.3)"></div>
<svg width="0" height="0" style="position:absolute"><defs><radialGradient id="og1" cx="50%" cy="50%" r="50%"><stop offset="0" stop-color="#ffbd48"/><stop offset="0.6" stop-color="#ffa820"/><stop offset="1" stop-color="#ff9c12"/></radialGradient><symbol id="img1" viewBox="0 0 269 168" preserveAspectRatio="none"><rect width="269" height="168" fill="#fa8c04"/><circle cx="5" cy="168" r="50" fill="#fff6e4"/><circle cx="5" cy="168" r="46.8" fill="#ffd27c"/><circle cx="5" cy="168" r="45.6" fill="url(#og1)"/><path d="M5 168 L48.5 181.4 M5 168 L34.3 202.8 M5 168 L10.8 213.1 M5 168 L-14.5 209.1 M5 168 L-33.6 192.0 M5 168 L-40.5 167.3 M5 168 L-32.9 142.9 M5 168 L-13.3 126.3 M5 168 L12.1 123.1 M5 168 L35.3 134.0 M5 168 L48.8 155.8" stroke="#ffd48a" stroke-width="0.6" opacity="0.45"/><circle cx="5" cy="168" r="3.2" fill="#ffffff" opacity="0.5"/><circle cx="5" cy="168" r="2.2" fill="#fffaf2"/><circle cx="48" cy="92" r="46" fill="#fff6e4"/><circle cx="48" cy="92" r="42.8" fill="#ffd27c"/><circle cx="48" cy="92" r="41.6" fill="url(#og1)"/><path d="M48 92 L87.6 104.3 M48 92 L74.7 123.8 M48 92 L53.3 133.2 M48 92 L30.2 129.5 M48 92 L12.8 113.9 M48 92 L6.5 91.4 M48 92 L13.4 69.1 M48 92 L31.3 54.0 M48 92 L54.5 51.0 M48 92 L75.6 61.0 M48 92 L88.0 80.9" stroke="#ffd48a" stroke-width="0.6" opacity="0.45"/><circle cx="48" cy="92" r="3.2" fill="#ffffff" opacity="0.5"/><circle cx="48" cy="92" r="2.2" fill="#fffaf2"/><circle cx="12" cy="48" r="46" fill="#fff6e4"/><circle cx="12" cy="48" r="42.8" fill="#ffd27c"/><circle cx="12" cy="48" r="41.6" fill="url(#og1)"/><path d="M12 48 L51.6 60.3 M12 48 L38.7 79.8 M12 48 L17.3 89.2 M12 48 L-5.8 85.5 M12 48 L-23.2 69.9 M12 48 L-29.5 47.4 M12 48 L-22.6 25.1 M12 48 L-4.7 10.0 M12 48 L18.5 7.0 M12 48 L39.6 17.0 M12 48 L52.0 36.9" stroke="#ffd48a" stroke-width="0.6" opacity="0.45"/><circle cx="12" cy="48" r="3.2" fill="#ffffff" opacity="0.5"/><circle cx="12" cy="48" r="2.2" fill="#fffaf2"/><circle cx="26" cy="-22" r="44" fill="#fff6e4"/><circle cx="26" cy="-22" r="40.8" fill="#ffd27c"/><circle cx="26" cy="-22" r="39.6" fill="url(#og1)"/><path d="M26 -22 L63.7 -10.3 M26 -22 L51.4 8.2 M26 -22 L31.1 17.2 M26 -22 L9.1 13.7 M26 -22 L-7.5 -1.1 M26 -22 L-13.5 -22.6 M26 -22 L-6.9 -43.8 M26 -22 L10.1 -58.2 M26 -22 L32.2 -61.0 M26 -22 L52.3 -51.5 M26 -22 L64.1 -32.6" stroke="#ffd48a" stroke-width="0.6" opacity="0.45"/><circle cx="26" cy="-22" r="3.2" fill="#ffffff" opacity="0.5"/><circle cx="26" cy="-22" r="2.2" fill="#fffaf2"/><circle cx="75" cy="-25" r="44" fill="#fff6e4"/><circle cx="75" cy="-25" r="40.8" fill="#ffd27c"/><circle cx="75" cy="-25" r="39.6" fill="url(#og1)"/><path d="M75 -25 L112.7 -13.3 M75 -25 L100.4 5.2 M75 -25 L80.1 14.2 M75 -25 L58.1 10.7 M75 -25 L41.5 -4.1 M75 -25 L35.5 -25.6 M75 -25 L42.1 -46.8 M75 -25 L59.1 -61.2 M75 -25 L81.2 -64.0 M75 -25 L101.3 -54.5 M75 -25 L113.1 -35.6" stroke="#ffd48a" stroke-width="0.6" opacity="0.45"/><circle cx="75" cy="-25" r="3.2" fill="#ffffff" opacity="0.5"/><circle cx="75" cy="-25" r="2.2" fill="#fffaf2"/><circle cx="101" cy="42" r="50" fill="#fff6e4"/><circle cx="101" cy="42" r="46.8" fill="#ffd27c"/><circle cx="101" cy="42" r="45.6" fill="url(#og1)"/><path d="M101 42 L144.5 55.4 M101 42 L130.3 76.8 M101 42 L106.8 87.1 M101 42 L81.5 83.1 M101 42 L62.4 66.0 M101 42 L55.5 41.3 M101 42 L63.1 16.9 M101 42 L82.7 0.3 M101 42 L108.1 -2.9 M101 42 L131.3 8.0 M101 42 L144.8 29.8" stroke="#ffd48a" stroke-width="0.6" opacity="0.45"/><circle cx="101" cy="42" r="3.2" fill="#ffffff" opacity="0.5"/><circle cx="101" cy="42" r="2.2" fill="#fffaf2"/><circle cx="97" cy="152" r="56" fill="#fff6e4"/><circle cx="97" cy="152" r="52.8" fill="#ffd27c"/><circle cx="97" cy="152" r="51.6" fill="url(#og1)"/><path d="M97 152 L146.2 167.2 M97 152 L130.2 191.4 M97 152 L103.6 203.1 M97 152 L74.9 198.5 M97 152 L53.3 179.2 M97 152 L45.5 151.3 M97 152 L54.1 123.5 M97 152 L76.3 104.9 M97 152 L105.1 101.1 M97 152 L131.3 113.6 M97 152 L146.6 138.2" stroke="#ffd48a" stroke-width="0.6" opacity="0.45"/><circle cx="97" cy="152" r="3.2" fill="#ffffff" opacity="0.5"/><circle cx="97" cy="152" r="2.2" fill="#fffaf2"/><circle cx="262" cy="-30" r="51" fill="#fff6e4"/><circle cx="262" cy="-30" r="47.8" fill="#ffd27c"/><circle cx="262" cy="-30" r="46.6" fill="url(#og1)"/><path d="M262 -30 L306.4 -16.3 M262 -30 L291.9 5.6 M262 -30 L268.0 16.1 M262 -30 L242.1 12.0 M262 -30 L222.5 -5.4 M262 -30 L215.5 -30.7 M262 -30 L223.2 -55.7 M262 -30 L243.3 -72.6 M262 -30 L269.3 -75.9 M262 -30 L293.0 -64.7 M262 -30 L306.8 -42.5" stroke="#ffd48a" stroke-width="0.6" opacity="0.45"/><circle cx="262" cy="-30" r="3.2" fill="#ffffff" opacity="0.5"/><circle cx="262" cy="-30" r="2.2" fill="#fffaf2"/><circle cx="282" cy="52" r="54" fill="#fff6e4"/><circle cx="282" cy="52" r="50.8" fill="#ffd27c"/><circle cx="282" cy="52" r="49.6" fill="url(#og1)"/><path d="M282 52 L329.3 66.6 M282 52 L313.9 89.9 M282 52 L288.3 101.1 M282 52 L260.8 96.7 M282 52 L240.0 78.2 M282 52 L232.5 51.3 M282 52 L240.7 24.6 M282 52 L262.1 6.7 M282 52 L289.7 3.1 M282 52 L315.0 15.1 M282 52 L329.7 38.7" stroke="#ffd48a" stroke-width="0.6" opacity="0.45"/><circle cx="282" cy="52" r="3.2" fill="#ffffff" opacity="0.5"/><circle cx="282" cy="52" r="2.2" fill="#fffaf2"/><circle cx="186" cy="36" r="51" fill="#fff6e4"/><circle cx="186" cy="36" r="47.8" fill="#ffd27c"/><circle cx="186" cy="36" r="46.6" fill="url(#og1)"/><path d="M186 36 L230.4 49.7 M186 36 L215.9 71.6 M186 36 L192.0 82.1 M186 36 L166.1 78.0 M186 36 L146.5 60.6 M186 36 L139.5 35.3 M186 36 L147.2 10.3 M186 36 L167.3 -6.6 M186 36 L193.3 -9.9 M186 36 L217.0 1.3 M186 36 L230.8 23.5" stroke="#ffd48a" stroke-width="0.6" opacity="0.45"/><circle cx="186" cy="36" r="3.2" fill="#ffffff" opacity="0.5"/><circle cx="186" cy="36" r="2.2" fill="#fffaf2"/><circle cx="245" cy="152" r="51" fill="#fff6e4"/><circle cx="245" cy="152" r="47.8" fill="#ffd27c"/><circle cx="245" cy="152" r="46.6" fill="url(#og1)"/><path d="M245 152 L289.4 165.7 M245 152 L274.9 187.6 M245 152 L251.0 198.1 M245 152 L225.1 194.0 M245 152 L205.5 176.6 M245 152 L198.5 151.3 M245 152 L206.2 126.3 M245 152 L226.3 109.4 M245 152 L252.3 106.1 M245 152 L276.0 117.3 M245 152 L289.8 139.5" stroke="#ffd48a" stroke-width="0.6" opacity="0.45"/><circle cx="245" cy="152" r="3.2" fill="#ffffff" opacity="0.5"/><circle cx="245" cy="152" r="2.2" fill="#fffaf2"/><circle cx="175" cy="200" r="45" fill="#fff6e4"/><circle cx="175" cy="200" r="41.8" fill="#ffd27c"/><circle cx="175" cy="200" r="40.6" fill="url(#og1)"/><path d="M175 200 L213.7 212.0 M175 200 L201.1 231.0 M175 200 L180.2 240.2 M175 200 L157.6 236.6 M175 200 L140.6 221.4 M175 200 L134.5 199.4 M175 200 L141.2 177.6 M175 200 L158.7 162.9 M175 200 L181.3 160.0 M175 200 L202.0 169.8 M175 200 L214.0 189.2" stroke="#ffd48a" stroke-width="0.6" opacity="0.45"/><circle cx="175" cy="200" r="3.2" fill="#ffffff" opacity="0.5"/><circle cx="175" cy="200" r="2.2" fill="#fffaf2"/><circle cx="183" cy="121" r="47" fill="#fff6e4"/><circle cx="183" cy="121" r="43.8" fill="#ffd27c"/><circle cx="183" cy="121" r="42.6" fill="url(#og1)"/><path d="M183 121 L223.6 133.6 M183 121 L210.4 153.5 M183 121 L188.4 163.2 M183 121 L164.8 159.4 M183 121 L146.9 143.5 M183 121 L140.5 120.4 M183 121 L147.6 97.5 M183 121 L165.9 82.1 M183 121 L189.7 79.0 M183 121 L211.3 89.3 M183 121 L223.9 109.6" stroke="#ffd48a" stroke-width="0.6" opacity="0.45"/><circle cx="183" cy="121" r="3.2" fill="#ffffff" opacity="0.5"/><circle cx="183" cy="121" r="2.2" fill="#fffaf2"/></symbol><symbol id="img2" viewBox="0 0 1093 685" preserveAspectRatio="none"><rect width="1093" height="685" fill="#2a1606"/><circle cx="763" cy="25" r="104.50000000000001" fill="#f06a1a"/><circle cx="731.6" cy="-6.4" r="47.0" fill="#f06a1a" opacity="0.55"/><circle cx="273" cy="655" r="93.50000000000001" fill="#ef5a1e"/><circle cx="244.9" cy="627.0" r="42.1" fill="#ef5a1e" opacity="0.55"/><circle cx="463" cy="655" r="82.5" fill="#58b02a"/><circle cx="438.2" cy="630.2" r="37.1" fill="#58b02a" opacity="0.55"/><circle cx="663" cy="665" r="82.5" fill="#f7d327"/><circle cx="638.2" cy="640.2" r="37.1" fill="#f7d327" opacity="0.55"/><circle cx="23" cy="410" r="82.5" fill="#f29224"/><circle cx="-1.8" cy="385.2" r="37.1" fill="#f29224" opacity="0.55"/><circle cx="643" cy="80" r="99.00000000000001" fill="#3aa52a"/><circle cx="613.3" cy="50.3" r="44.6" fill="#8ad65a" opacity="0.55"/><circle cx="983" cy="60" r="126.50000000000001" fill="#f7c01f"/><circle cx="945.0" cy="22.0" r="56.9" fill="#ffe46a" opacity="0.55"/><circle cx="333" cy="90" r="104.50000000000001" fill="#e8401c"/><circle cx="301.6" cy="58.6" r="47.0" fill="#ff7a3a" opacity="0.55"/><circle cx="83" cy="285" r="82.5" fill="#2e9f2a"/><circle cx="58.2" cy="260.2" r="37.1" fill="#6fd04a" opacity="0.55"/><circle cx="833" cy="140" r="115.50000000000001" fill="#ef5b1f"/><circle cx="798.4" cy="105.3" r="52.0" fill="#ff8a3a" opacity="0.55"/><circle cx="1013" cy="220" r="110.00000000000001" fill="#4cb52d"/><circle cx="980.0" cy="187.0" r="49.5" fill="#8fe060" opacity="0.55"/><circle cx="123" cy="100" r="148.5" fill="#f3a21c"/><circle cx="78.5" cy="55.5" r="66.8" fill="#ffd35a" opacity="0.55"/><circle cx="493" cy="240" r="121.00000000000001" fill="#f6a020"/><circle cx="456.7" cy="203.7" r="54.5" fill="#ffd05a" opacity="0.55"/><circle cx="773" cy="330" r="93.50000000000001" fill="#f6b127"/><circle cx="745.0" cy="301.9" r="42.1" fill="#ffd86a" opacity="0.55"/><circle cx="623" cy="410" r="110.00000000000001" fill="#ef6a1e"/><circle cx="590.0" cy="377.0" r="49.5" fill="#ff9a4a" opacity="0.55"/><circle cx="1003" cy="420" r="118.80000000000001" fill="#6cc83b"/><circle cx="967.4" cy="384.4" r="53.5" fill="#b0ec7a" opacity="0.55"/><circle cx="143" cy="480" r="107.80000000000001" fill="#ea4b1c"/><circle cx="110.7" cy="447.7" r="48.5" fill="#ff7a3a" opacity="0.55"/><circle cx="1003" cy="610" r="104.50000000000001" fill="#f05a1c"/><circle cx="971.6" cy="578.6" r="47.0" fill="#ff8a4a" opacity="0.55"/><circle cx="53" cy="625" r="88.0" fill="#5abb2a"/><circle cx="26.6" cy="598.6" r="39.6" fill="#9ae06a" opacity="0.55"/><circle cx="383" cy="480" r="140.8" fill="#f6a32a"/><circle cx="340.8" cy="437.8" r="63.4" fill="#ffd866" opacity="0.55"/><circle cx="473" cy="70" r="102.9" fill="#d7e6b0"/><circle cx="473" cy="70" r="90.6" fill="#fff4dc"/><circle cx="473" cy="70" r="84.4" fill="#d8c67a"/><circle cx="473" cy="70" r="12.3" fill="#fff" opacity="0.8"/><circle cx="273" cy="250" r="134.4" fill="#f4d9b0"/><circle cx="273" cy="250" r="118.3" fill="#fff4dc"/><circle cx="273" cy="250" r="110.2" fill="#f0607a"/><circle cx="273" cy="250" r="16.1" fill="#fff" opacity="0.8"/><circle cx="688" cy="210" r="102.9" fill="#f5c060"/><circle cx="688" cy="210" r="90.6" fill="#fff4dc"/><circle cx="688" cy="210" r="84.4" fill="#f58a1f"/><circle cx="688" cy="210" r="12.3" fill="#fff" opacity="0.8"/><circle cx="513" cy="360" r="81.9" fill="#4a8a1c"/><circle cx="513" cy="360" r="69.6" fill="#7cc83a"/><circle cx="513" cy="360" r="34.4" fill="#2b3a10"/><circle cx="513" cy="360" r="20.5" fill="#e8eec0"/><circle cx="898" cy="295" r="81.9" fill="#4a8a1c"/><circle cx="898" cy="295" r="69.6" fill="#7cc83a"/><circle cx="898" cy="295" r="34.4" fill="#2b3a10"/><circle cx="898" cy="295" r="20.5" fill="#e8eec0"/><circle cx="208" cy="545" r="107.10000000000001" fill="#6ab83a"/><circle cx="208" cy="545" r="94.2" fill="#fff4dc"/><circle cx="208" cy="545" r="87.8" fill="#c9b86c"/><circle cx="208" cy="545" r="12.9" fill="#fff" opacity="0.8"/><circle cx="573" cy="560" r="107.10000000000001" fill="#f5c060"/><circle cx="573" cy="560" r="94.2" fill="#fff4dc"/><circle cx="573" cy="560" r="87.8" fill="#f59424"/><circle cx="573" cy="560" r="12.9" fill="#fff" opacity="0.8"/><circle cx="803" cy="545" r="134.4" fill="#f5c070"/><circle cx="803" cy="545" r="118.3" fill="#fff4dc"/><circle cx="803" cy="545" r="110.2" fill="#e8201a"/><circle cx="803" cy="545" r="16.1" fill="#fff" opacity="0.8"/></symbol><radialGradient id="tg" cx="40%" cy="35%" r="65%"><stop offset="0" stop-color="#ffac2a"/><stop offset="0.6" stop-color="#f78e14"/><stop offset="1" stop-color="#c05a06"/></radialGradient><symbol id="img3" viewBox="0 0 727 727" preserveAspectRatio="none"><rect width="727" height="727" fill="#7a3803"/><circle cx="57" cy="62" r="84.00000000000001" fill="url(#tg)"/><circle cx="57" cy="62" r="5.0" fill="#6a6a20"/><circle cx="312" cy="67" r="103.04" fill="url(#tg)"/><circle cx="312" cy="67" r="6.2" fill="#6a6a20"/><circle cx="442" cy="67" r="69.44000000000001" fill="url(#tg)"/><circle cx="442" cy="67" r="4.2" fill="#6a6a20"/><circle cx="167" cy="102" r="69.44000000000001" fill="url(#tg)"/><circle cx="167" cy="102" r="4.2" fill="#6a6a20"/><circle cx="687" cy="102" r="61.60000000000001" fill="url(#tg)"/><circle cx="687" cy="102" r="3.7" fill="#6a6a20"/><circle cx="167" cy="232" r="84.00000000000001" fill="url(#tg)"/><circle cx="167" cy="232" r="5.0" fill="#6a6a20"/><circle cx="462" cy="212" r="109.76" fill="url(#tg)"/><circle cx="462" cy="212" r="6.6" fill="#6a6a20"/><circle cx="687" cy="222" r="69.44000000000001" fill="url(#tg)"/><circle cx="687" cy="222" r="4.2" fill="#6a6a20"/><circle cx="567" cy="262" r="64.96000000000001" fill="url(#tg)"/><circle cx="567" cy="262" r="3.9" fill="#6a6a20"/><circle cx="32" cy="402" r="69.44000000000001" fill="url(#tg)"/><circle cx="32" cy="402" r="4.2" fill="#6a6a20"/><circle cx="167" cy="392" r="114.24000000000001" fill="url(#tg)"/><circle cx="167" cy="392" r="6.9" fill="#6a6a20"/><circle cx="397" cy="412" r="114.24000000000001" fill="url(#tg)"/><circle cx="397" cy="412" r="6.9" fill="#6a6a20"/><circle cx="687" cy="402" r="61.60000000000001" fill="url(#tg)"/><circle cx="687" cy="402" r="3.7" fill="#6a6a20"/><circle cx="507" cy="562" r="95.2" fill="url(#tg)"/><circle cx="507" cy="562" r="5.7" fill="#6a6a20"/><circle cx="137" cy="562" r="72.80000000000001" fill="url(#tg)"/><circle cx="137" cy="562" r="4.4" fill="#6a6a20"/><circle cx="237" cy="552" r="72.80000000000001" fill="url(#tg)"/><circle cx="237" cy="552" r="4.4" fill="#6a6a20"/><circle cx="197" cy="692" r="103.04" fill="url(#tg)"/><circle cx="197" cy="692" r="6.2" fill="#6a6a20"/><circle cx="397" cy="692" r="95.2" fill="url(#tg)"/><circle cx="397" cy="692" r="5.7" fill="#6a6a20"/><circle cx="577" cy="692" r="84.00000000000001" fill="url(#tg)"/><circle cx="577" cy="692" r="5.0" fill="#6a6a20"/><circle cx="582" cy="52" r="88" fill="#f08a14"/><circle cx="582" cy="52" r="82.7" fill="#ffe0a0"/><circle cx="582" cy="52" r="77.4" fill="#ff8d1c"/><circle cx="582" cy="52" r="8.8" fill="#fff4e0"/><circle cx="62" cy="242" r="80" fill="#f08a14"/><circle cx="62" cy="242" r="75.2" fill="#ffe0a0"/><circle cx="62" cy="242" r="70.4" fill="#ff8d1c"/><circle cx="62" cy="242" r="8.0" fill="#fff4e0"/><circle cx="302" cy="222" r="78" fill="#f08a14"/><circle cx="302" cy="222" r="73.3" fill="#ffe0a0"/><circle cx="302" cy="222" r="68.6" fill="#ff8d1c"/><circle cx="302" cy="222" r="7.8" fill="#fff4e0"/><circle cx="617" cy="412" r="92" fill="#f08a14"/><circle cx="617" cy="412" r="86.5" fill="#ffe0a0"/><circle cx="617" cy="412" r="81.0" fill="#ff8d1c"/><circle cx="617" cy="412" r="9.2" fill="#fff4e0"/><circle cx="327" cy="587" r="108" fill="#f08a14"/><circle cx="327" cy="587" r="101.5" fill="#ffe0a0"/><circle cx="327" cy="587" r="95.0" fill="#ff8d1c"/><circle cx="327" cy="587" r="10.8" fill="#fff4e0"/><circle cx="47" cy="652" r="75" fill="#f08a14"/><circle cx="47" cy="652" r="70.5" fill="#ffe0a0"/><circle cx="47" cy="652" r="66.0" fill="#ff8d1c"/><circle cx="47" cy="652" r="7.5" fill="#fff4e0"/><circle cx="682" cy="622" r="65" fill="#f08a14"/><circle cx="682" cy="622" r="61.1" fill="#ffe0a0"/><circle cx="682" cy="622" r="57.2" fill="#ff8d1c"/><circle cx="682" cy="622" r="6.5" fill="#fff4e0"/><ellipse cx="177" cy="117" rx="28" ry="48" fill="#2f6f22" transform="rotate(20 177 117)"/><ellipse cx="597" cy="202" rx="32" ry="62" fill="#2f6f22" transform="rotate(-25 597 202)"/><ellipse cx="507" cy="347" rx="52" ry="30" fill="#2f6f22" transform="rotate(15 507 347)"/><ellipse cx="307" cy="347" rx="35" ry="20" fill="#2f6f22" transform="rotate(-30 307 347)"/><ellipse cx="67" cy="522" rx="45" ry="55" fill="#2f6f22" transform="rotate(-20 67 522)"/><ellipse cx="627" cy="552" rx="22" ry="62" fill="#2f6f22" transform="rotate(40 627 552)"/><ellipse cx="517" cy="652" rx="42" ry="20" fill="#2f6f22" transform="rotate(10 517 652)"/><ellipse cx="697" cy="302" rx="35" ry="18" fill="#2f6f22" transform="rotate(-15 697 302)"/><ellipse cx="77" cy="157" rx="32" ry="14" fill="#2f6f22" transform="rotate(20 77 157)"/></symbol><linearGradient id="bg4" x1="0" y1="0" x2="1" y2="0"><stop offset="0" stop-color="#1e1a16"/><stop offset="0.45" stop-color="#35302b"/><stop offset="0.85" stop-color="#6b6b6b"/><stop offset="1" stop-color="#4a4a4a"/></linearGradient><radialGradient id="og4" cx="40%" cy="35%" r="65%"><stop offset="0" stop-color="#f27024"/><stop offset="0.6" stop-color="#dc520e"/><stop offset="1" stop-color="#8a2a05"/></radialGradient><linearGradient id="burlsh" x1="0" y1="0" x2="0.3" y2="1"><stop offset="0" stop-color="#000" stop-opacity="0"/><stop offset="0.6" stop-color="#000" stop-opacity="0.05"/><stop offset="1" stop-color="#000" stop-opacity="0.22"/></linearGradient><pattern id="burl" width="36" height="36" patternUnits="userSpaceOnUse" patternTransform="rotate(-20)"><rect width="36" height="36" fill="#75624a"/><path d="M0 9 H36 M0 27 H36" stroke="#bda883" stroke-width="9"/><path d="M9 0 V36 M27 0 V36" stroke="#a08a68" stroke-width="7"/><path d="M0 18 H36 M18 0 V36" stroke="#4e3f2c" stroke-width="3"/></pattern><symbol id="img4" viewBox="0 0 1096 687" preserveAspectRatio="none"><rect width="1096" height="687" fill="url(#bg4)"/><rect y="630" width="1096" height="57" fill="#5e3418"/><ellipse cx="400" cy="150" rx="60" ry="50" fill="#2e4a20"/><ellipse cx="560" cy="90" rx="50" ry="30" fill="#4f7a30"/><ellipse cx="620" cy="230" rx="55" ry="70" fill="#5c9a3a" transform="rotate(-20 620 230)"/><ellipse cx="520" cy="170" rx="25" ry="60" fill="#5c9a3a" transform="rotate(20 520 170)"/><circle cx="73" cy="147" r="82" fill="url(#og4)"/><circle cx="213" cy="157" r="88" fill="url(#og4)"/><circle cx="143" cy="272" r="62" fill="url(#og4)"/><circle cx="278" cy="302" r="72" fill="url(#og4)"/><circle cx="568" cy="302" r="42" fill="url(#og4)"/><circle cx="428" cy="237" r="108" fill="url(#og4)"/><circle cx="698" cy="362" r="102" fill="url(#og4)"/><path d="M0 250 Q120 240 280 330 Q430 420 490 560 L500 687 L0 687 Z" fill="url(#burl)"/><path d="M0 250 Q120 240 280 330 Q430 420 490 560 L500 687 L0 687 Z" fill="url(#burlsh)"/><ellipse cx="483" cy="412.8" rx="112" ry="88" fill="#d8560e"/><ellipse cx="483" cy="382" rx="112" ry="74.8" fill="#ffd98a"/><ellipse cx="483" cy="382" rx="100.8" ry="66.0" fill="#f8a020"/><circle cx="618" cy="542" r="108" fill="url(#og4)"/><circle cx="858" cy="512" r="102" fill="url(#og4)"/><ellipse cx="838" cy="575.2" rx="118" ry="72" fill="#d8560e"/><ellipse cx="838" cy="550" rx="118" ry="61.2" fill="#ffd98a"/><ellipse cx="838" cy="550" rx="106.2" ry="54.0" fill="#f8a020"/></symbol></defs></svg>
<svg style="position:absolute;left:79px;top:233px" width="269" height="168"><use href="#img1" width="269" height="168"/></svg>
<svg style="position:absolute;left:381px;top:230px" width="147" height="91"><use href="#img1" width="147" height="91"/></svg>
<svg style="position:absolute;left:565px;top:229px" width="149" height="93"><use href="#img2" width="149" height="93"/></svg>
<svg style="position:absolute;left:758px;top:209px" width="133" height="133"><use href="#img3" width="133" height="133"/></svg>
<svg style="position:absolute;left:380px;top:415px" width="149" height="93"><use href="#img4" width="149" height="93"/></svg>
<svg style="position:absolute;left:56px;top:654px" width="63" height="40"><use href="#img1" width="63" height="40"/></svg>
<svg style="position:absolute;left:128px;top:655px" width="61" height="38"><use href="#img2" width="61" height="38"/></svg>
<svg style="position:absolute;left:208px;top:651px" width="46" height="46"><use href="#img3" width="46" height="46"/></svg>
<svg style="position:absolute;left:272px;top:655px" width="62" height="38"><use href="#img4" width="62" height="38"/></svg>
<div style="position:absolute;left:360px;top:560px;width:41px;height:40px;border:5px solid #ff0000;border-radius:13px;background:radial-gradient(ellipse at 50% 45%,#4a4a4a 0%,#3e3e3e 55%,#2c2c2c 100%)"></div>
<svg style="position:absolute;left:369px;top:572px;" width="33" height="23" viewBox="0 0 33 23" preserveAspectRatio="none"><rect x="1.5" y="1.5" width="5" height="4" fill="url(#sq)" stroke="#1a1a1a" stroke-width="1"/><rect x="7.5" y="1.5" width="5" height="4" fill="url(#sq)" stroke="#1a1a1a" stroke-width="1"/><rect x="13.5" y="1.5" width="5" height="4" fill="url(#sq)" stroke="#1a1a1a" stroke-width="1"/><rect x="19.5" y="1.5" width="5" height="4" fill="url(#sq)" stroke="#1a1a1a" stroke-width="1"/><rect x="25.5" y="1.5" width="5" height="4" fill="url(#sq)" stroke="#1a1a1a" stroke-width="1"/><rect x="1.5" y="6.5" width="5" height="4" fill="url(#sq)" stroke="#1a1a1a" stroke-width="1"/><rect x="7.5" y="6.5" width="5" height="4" fill="url(#sq)" stroke="#1a1a1a" stroke-width="1"/><rect x="13.5" y="6.5" width="5" height="4" fill="url(#sq)" stroke="#1a1a1a" stroke-width="1"/><rect x="19.5" y="6.5" width="5" height="4" fill="#4e4e4e" stroke="#1a1a1a" stroke-width="1"/><rect x="25.5" y="6.5" width="5" height="4" fill="url(#sq)" stroke="#1a1a1a" stroke-width="1"/><rect x="1.5" y="11.5" width="5" height="4" fill="url(#sq)" stroke="#1a1a1a" stroke-width="1"/><rect x="7.5" y="11.5" width="5" height="4" fill="url(#sq)" stroke="#1a1a1a" stroke-width="1"/><rect x="13.5" y="11.5" width="5" height="4" fill="url(#sq)" stroke="#1a1a1a" stroke-width="1"/><rect x="19.5" y="11.5" width="5" height="4" fill="url(#sq)" stroke="#1a1a1a" stroke-width="1"/><rect x="25.5" y="11.5" width="5" height="4" fill="url(#sq)" stroke="#1a1a1a" stroke-width="1"/><rect x="1.5" y="16.5" width="5" height="4" fill="url(#sq)" stroke="#1a1a1a" stroke-width="1"/><rect x="7.5" y="16.5" width="5" height="4" fill="url(#sq)" stroke="#1a1a1a" stroke-width="1"/><rect x="13.5" y="16.5" width="5" height="4" fill="url(#sq)" stroke="#1a1a1a" stroke-width="1"/><rect x="19.5" y="16.5" width="5" height="4" fill="url(#sq)" stroke="#1a1a1a" stroke-width="1"/><rect x="25.5" y="16.5" width="5" height="4" fill="url(#sq)" stroke="#1a1a1a" stroke-width="1"/><defs><linearGradient id="sq" x1="0" y1="0" x2="0" y2="1"><stop offset="0" stop-color="#e8e8e8"/><stop offset="1" stop-color="#b8b8b8"/></linearGradient></defs></svg>
<svg style="position:absolute;left:948px;top:190px;" width="271" height="91" viewBox="0 0 271 91" preserveAspectRatio="none"><polygon points="2.0,90.0 7.0,89.3 26.0,88.5 39.6,82.5 49.0,77.0 53.0,66.0 57.0,42.0 60.0,17.6 61.3,0.0 63.4,17.6 69.4,28.4 77.5,36.6 83.0,31.0 87.0,42.0 91.0,58.0 99.0,71.7 112.7,78.5 134.3,82.5 156.0,85.0 162.0,89.0 162.0,90.0" fill="#3d6dcc"/><polygon points="164.0,90.0 170.8,85.2 176.2,71.7 180.3,31.0 182.4,4.0 188.4,15.0 195.0,21.7 201.4,10.9 207.3,28.4 212.7,52.8 220.9,69.0 231.7,79.8 242.5,81.0 258.7,74.4 265.5,77.0 268.0,89.0 268.0,90.0" fill="#72dc72"/><polygon points="102.0,90.0 132.0,87.0 162.0,85.5 202.0,84.0 232.0,85.5 252.0,86.0 267.0,88.0 269.0,90.0" fill="#30d8e6"/><polygon points="252.0,90.0 264.0,78.0 268.0,85.0 268.0,90.0" fill="#e8e060"/><polygon points="257.0,90.0 268.0,82.0 269.0,90.0" fill="#f0f0f0"/><rect x="266.5" y="47" width="1.5" height="43" fill="#e86a6a"/></svg>
<div style="position:absolute;left:514px;top:307px;width:15px;height:15px;background:#0a0a0a;border:1px solid #9a9a9a;box-sizing:border-box"></div>
<svg style="position:absolute;left:514px;top:307px;" width="15" height="15" viewBox="0 0 15 15" preserveAspectRatio="none"><path d="M3.8 6.0 H8.2 M6.0 3.8 V8.2" stroke="#ddd" stroke-width="1.2"/><polygon points="4.5,12.0 12.0,4.5 12.0,12.0" fill="#ddd"/></svg>
<div style="position:absolute;left:103px;top:680px;width:14px;height:14px;background:#0a0a0a;border:1px solid #9a9a9a;box-sizing:border-box"></div>
<svg style="position:absolute;left:103px;top:680px;" width="14" height="14" viewBox="0 0 14 14" preserveAspectRatio="none"><path d="M3.5 5.6 H7.7 M5.6 3.5 V7.7" stroke="#ddd" stroke-width="1.2"/><polygon points="4.2,11.2 11.2,4.2 11.2,11.2" fill="#ddd"/></svg>
</body></html>
